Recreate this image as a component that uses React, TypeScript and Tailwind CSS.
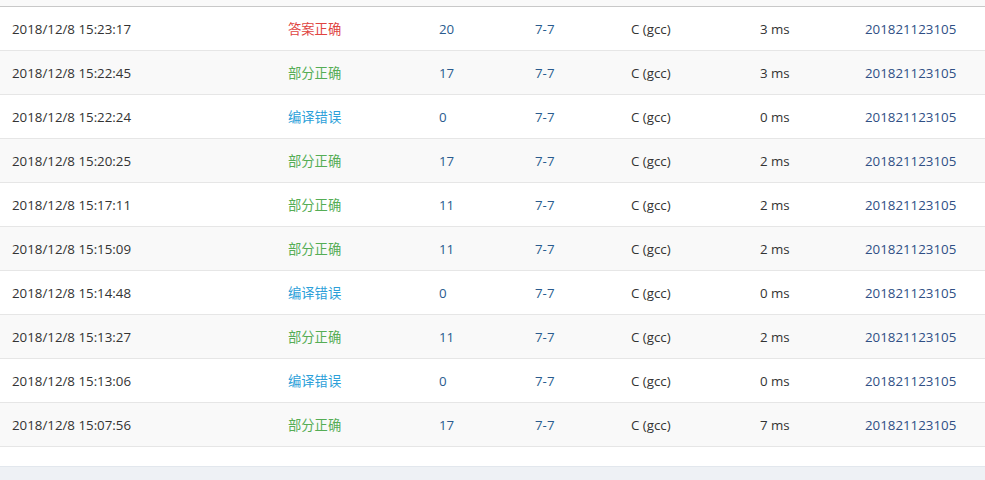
// 提交记录列表 — 截图复刻
type Status = "ac" | "partial" | "ce";

type Row = {
  time: string;
  status: Status;
  score: number;
  problem: string;
  lang: string;
  cost: string;
  user: string;
};

const STATUS_TEXT: Record<Status, string> = {
  ac: "答案正确",
  partial: "部分正确",
  ce: "编译错误",
};

const STATUS_CLASS: Record<Status, string> = {
  ac: "text-[#e0443f]",
  partial: "text-[#55ad55]",
  ce: "text-[#2b9fd9]",
};

const rows: Row[] = [
  { time: "2018/12/8 15:23:17", status: "ac", score: 20, problem: "7-7", lang: "C (gcc)", cost: "3 ms", user: "201821123105" },
  { time: "2018/12/8 15:22:45", status: "partial", score: 17, problem: "7-7", lang: "C (gcc)", cost: "3 ms", user: "201821123105" },
  { time: "2018/12/8 15:22:24", status: "ce", score: 0, problem: "7-7", lang: "C (gcc)", cost: "0 ms", user: "201821123105" },
  { time: "2018/12/8 15:20:25", status: "partial", score: 17, problem: "7-7", lang: "C (gcc)", cost: "2 ms", user: "201821123105" },
  { time: "2018/12/8 15:17:11", status: "partial", score: 11, problem: "7-7", lang: "C (gcc)", cost: "2 ms", user: "201821123105" },
  { time: "2018/12/8 15:15:09", status: "partial", score: 11, problem: "7-7", lang: "C (gcc)", cost: "2 ms", user: "201821123105" },
  { time: "2018/12/8 15:14:48", status: "ce", score: 0, problem: "7-7", lang: "C (gcc)", cost: "0 ms", user: "201821123105" },
  { time: "2018/12/8 15:13:27", status: "partial", score: 11, problem: "7-7", lang: "C (gcc)", cost: "2 ms", user: "201821123105" },
  { time: "2018/12/8 15:13:06", status: "ce", score: 0, problem: "7-7", lang: "C (gcc)", cost: "0 ms", user: "201821123105" },
  { time: "2018/12/8 15:07:56", status: "partial", score: 17, problem: "7-7", lang: "C (gcc)", cost: "7 ms", user: "201821123105" },
];

export default function App() {
  return (
    <div
      className="flex h-[480px] w-[985px] flex-col overflow-hidden bg-white text-[13.3px] text-[#333]"
      style={{ fontFamily: '"Open Sans", "Noto Sans CJK SC", sans-serif' }}
    >
      {/* 上一行残留 + 表头分隔线 */}
      <div className="h-[7px] shrink-0 border-b border-[#c8c8c8] bg-[#f9f9f9]" />

      <div className="flex flex-col">
        {rows.map((r, i) => (
          <div
            key={i}
            className={`grid h-[44px] grid-cols-[276px_151px_96px_96px_129px_105px_1fr] items-center border-b border-[#e6e6e6] pt-[2px] ${
              i % 2 === 1 ? "bg-[#f9f9f9]" : "bg-white"
            }`}
          >
            <div className="pl-3">{r.time}</div>
            <div className={`pl-3 ${STATUS_CLASS[r.status]}`}>{STATUS_TEXT[r.status]}</div>
            <div className="pl-3 text-[#2a5b8e]">{r.score}</div>
            <div className="pl-3 text-[#2a5b8e]">{r.problem}</div>
            <div className="pl-3">{r.lang}</div>
            <div className="pl-3">{r.cost}</div>
            <div className="pl-3 text-[#2f4f85]">{r.user}</div>
          </div>
        ))}
      </div>

      <div className="h-[19px] shrink-0 bg-white" />
      {/* 页面底色 */}
      <div className="flex-1 border-t border-[#e2e7ed] bg-[#eef1f5]" />
    </div>
  );
}
